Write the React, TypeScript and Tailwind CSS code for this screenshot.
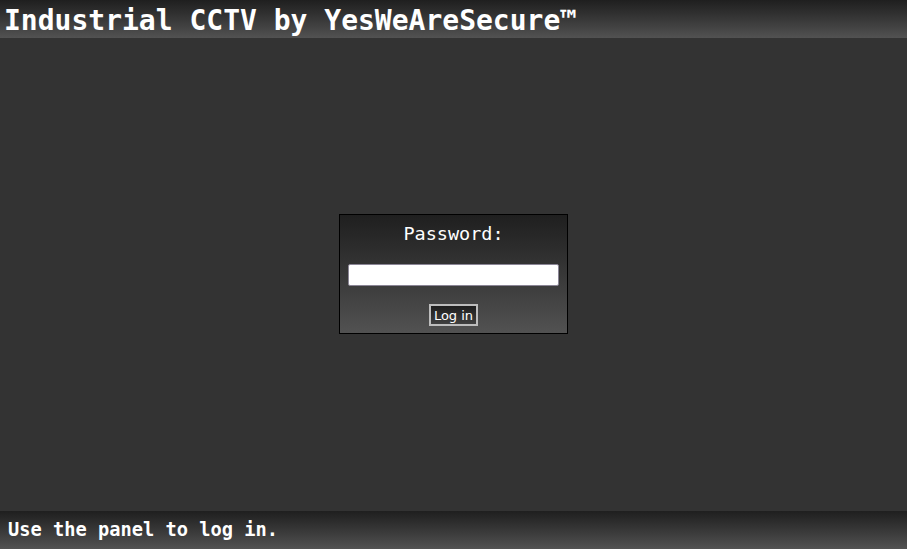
export default function App() {
  return (
    <div className="flex h-[549px] w-full flex-col bg-[#333333] font-['DejaVu_Sans_Mono',monospace] text-white">
      {/* Header */}
      <div className="flex h-[38px] shrink-0 items-center bg-gradient-to-b from-[#1f1f1f] to-[#525252] px-[4px]">
        <h1 className="pt-[3px] text-[28px] font-bold leading-none">Industrial CCTV by YesWeAreSecure™</h1>
      </div>

      {/* Main */}
      <div className="flex flex-1 items-center justify-center">
        <div className="-mt-[1px] flex h-[120px] w-[229px] flex-col items-center border border-black bg-gradient-to-b from-[#1f1f1f] to-[#525252]">
          <div className="mt-[9px] text-[18.5px] leading-[20px]">Password:</div>
          <input
            type="password"
            className="mt-[20px] h-[22px] w-[211px] rounded-[2px] border border-[#8a8595] bg-white outline-none"
          />
          <button className="mt-[18px] h-[22px] w-[49px] border-2 border-[#bdbdbd] bg-gradient-to-b from-[#1e1e1e] to-[#404040] font-['DejaVu_Sans',sans-serif] text-[13px] leading-none text-white">
            Log in
          </button>
        </div>
      </div>

      {/* Footer */}
      <div className="flex h-[38px] shrink-0 items-center bg-gradient-to-b from-[#1f1f1f] to-[#525252] px-[8px]">
        <h3 className="pt-[1px] text-[18.7px] font-bold leading-none">Use the panel to log in.</h3>
      </div>
    </div>
  );
}
